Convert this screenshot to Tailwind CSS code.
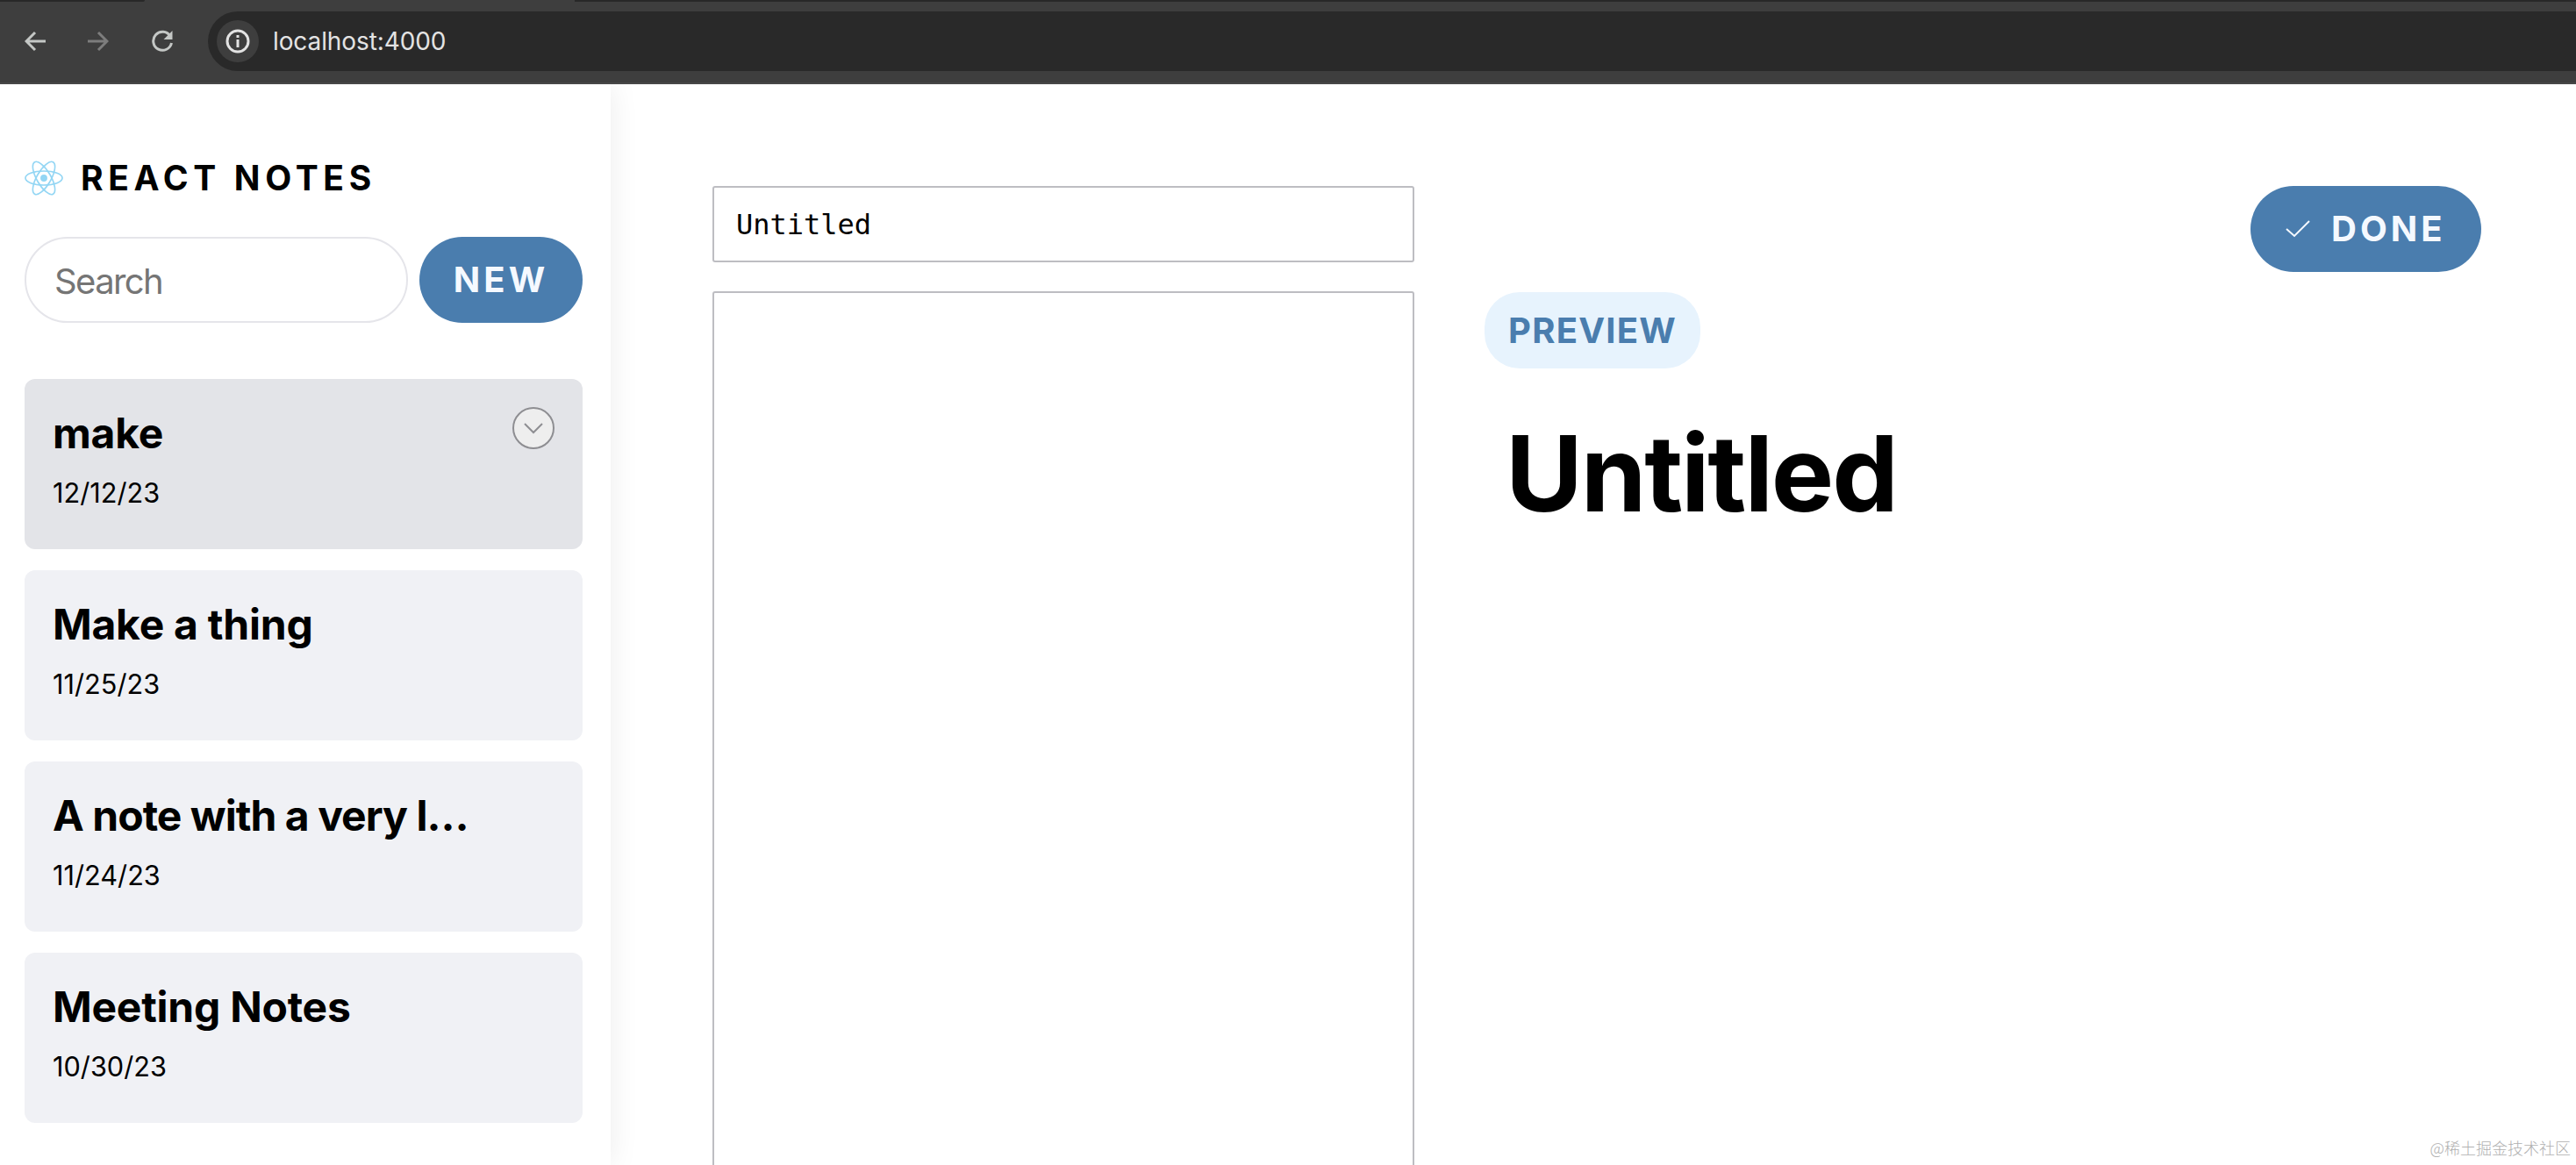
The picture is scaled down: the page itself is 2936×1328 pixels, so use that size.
<!DOCTYPE html>
<html lang="en">
<head>
<meta charset="utf-8">
<title>React Notes</title>
<script src="https://cdn.jsdelivr.net/npm/@tailwindcss/browser@4"></script>
</head>
<body class="h-[1328px] w-[2936px] overflow-hidden bg-white font-['Inter',sans-serif] text-black">
<div class="relative z-20 flex h-[96px] items-center border-b-2 border-[#474747] bg-[#3e3e3e] pl-[28px]">
  <div class="absolute left-0 top-0 h-[2px] w-[165px] rounded-br-[4px] bg-[#282828]"></div>
  <div class="absolute left-[655px] right-0 top-0 h-[2px] bg-[#282828]"></div>
  <div class="flex items-center gap-[48px]">
    <svg class="h-[24px] w-[24px]" viewBox="0 0 24 24" fill="none" stroke="#c4c7c5" stroke-width="3"><path d="M24 12H3M12 2 2 12l10 10"/></svg>
    <svg class="h-[24px] w-[24px]" viewBox="0 0 24 24" fill="none" stroke="#7d7d7d" stroke-width="3"><path d="M0 12h21M12 2l10 10-10 10"/></svg>
    <svg class="h-[26px] w-[26px]" viewBox="0 0 26 26" fill="none" stroke="#c4c7c5" stroke-width="3"><path d="M22 7a10.5 10.5 0 1 0 1.5 8"/><path d="M24.5 1v10h-10z" fill="#c4c7c5" stroke="none"/></svg>
  </div>
  <div class="ml-[39px] flex h-[68px] flex-1 items-center rounded-l-[34px] bg-[#292929] pl-[10px]">
    <div class="flex h-[48px] w-[48px] items-center justify-center rounded-full bg-[#3e3e3e]">
      <svg class="h-[28px] w-[28px]" viewBox="0 0 28 28" fill="none" stroke="#e3e3e3" stroke-width="3"><circle cx="14" cy="14" r="12"/><path d="M14 12v9M14 7v3"/></svg>
    </div>
    <span class="ml-[16px] text-[28px] tracking-[-0.1px] text-[#e3e3e3]">localhost:4000</span>
  </div>
</div>
<div class="flex h-[1232px] overflow-hidden">
  <aside class="relative z-10 flex w-[696px] shrink-0 flex-col bg-white pl-[28px] pr-[32px] pt-[87px] shadow-[0_0_32px_rgba(0,0,0,0.08)]">
    <div class="flex h-[40px] items-center gap-[20px]">
      <svg class="h-[40px] w-[44px]" viewBox="-11.5 -10.23 23 20.46" fill="none" stroke="#93d6f4" stroke-width="0.85"><circle r="2.05" fill="#93d6f4" stroke="none"/><ellipse rx="11" ry="4.2"/><ellipse rx="11" ry="4.2" transform="rotate(60)"/><ellipse rx="11" ry="4.2" transform="rotate(120)"/></svg>
      <span class="text-[39px] font-bold leading-[42px] tracking-[0.145em]">REACT NOTES</span>
    </div>
    <div class="mt-[47px] flex gap-[13px]">
      <div class="flex h-[98px] w-[437px] items-center rounded-full border-2 border-[#e5e5ea] pl-[32px] pt-[3px] text-[40px] tracking-[-1.6px] text-[#757575]">Search</div>
      <div class="flex h-[98px] w-[186px] items-center justify-center rounded-full bg-[#4a7dae] text-[40px] font-bold tracking-[0.1em] text-[#f5f9ff]">NEW</div>
    </div>
    <ul class="mt-[64px] flex flex-col gap-[24px]">
      <li class="relative h-[194px] rounded-[12px] bg-[#e3e4e8] pl-[32px] pt-[32px]">
        <div class="truncate text-[48px] font-bold leading-[60px] tracking-[-0.005em]">make</div>
        <div class="mt-[18px] text-[30.7px] leading-[40px]">12/12/23</div>
        <div class="absolute right-[32px] top-[32px] flex h-[48px] w-[48px] items-center justify-center rounded-full border-2 border-[#8e8e92] bg-[#eeeeee]">
          <svg class="h-[14px] w-[24px]" viewBox="0 0 24 14" fill="none" stroke="#8e8e92" stroke-width="2"><path d="M2 2l10 10L22 2"/></svg>
        </div>
      </li>
      <li class="h-[194px] rounded-[12px] bg-[#f0f1f5] pl-[32px] pt-[32px]">
        <div class="truncate text-[48px] font-bold leading-[60px] tracking-[-0.005em]">Make a thing</div>
        <div class="mt-[18px] text-[30.7px] leading-[40px]">11/25/23</div>
      </li>
      <li class="h-[194px] rounded-[12px] bg-[#f0f1f5] pl-[32px] pt-[32px]">
        <div class="truncate text-[48px] font-bold leading-[60px] tracking-[-0.02em]">A note with a very l…</div>
        <div class="mt-[18px] text-[30.7px] leading-[40px]">11/24/23</div>
      </li>
      <li class="h-[194px] rounded-[12px] bg-[#f0f1f5] pl-[32px] pt-[32px]">
        <div class="truncate text-[48px] font-bold leading-[60px] tracking-[-0.005em]">Meeting Notes</div>
        <div class="mt-[18px] text-[30.7px] leading-[40px]">10/30/23</div>
      </li>
    </ul>
  </aside>
  <main class="relative flex flex-1 gap-[80px] pl-[116px] pr-[108px] pt-[116px]">
    <form class="flex w-[800px] shrink-0 flex-col gap-[33px]">
      <div class="flex h-[87px] shrink-0 items-center rounded-[3px] border-2 border-[#bdbdc2] pl-[25px] font-['DejaVu_Sans_Mono',monospace] text-[32px]">Untitled</div>
      <div class="h-[1200px] shrink-0 rounded-[3px] border-2 border-[#bdbdc2]"></div>
    </form>
    <section class="flex flex-1 flex-col items-start">
      <div class="flex h-[98px] w-[263px] items-center gap-[24px] self-end rounded-full bg-[#4a7dae] pl-[40px] text-[40px] font-bold tracking-[0.1em] text-[#f5f9ff]">
        <svg class="h-[20px] w-[28px]" viewBox="0 0 28 20" fill="none" stroke="#f5f9ff" stroke-width="2"><path d="M1 10l9 8L27 1"/></svg>
        <span>DONE</span>
      </div>
      <div class="mt-[23px] flex h-[87px] w-[246px] items-center justify-center rounded-[40px] bg-[#e7f3fd] pt-[1px] text-[40px] font-bold tracking-[0.03em] text-[#4a7dae]">PREVIEW</div>
      <h1 class="ml-[24px] mt-[45px] text-[120px] font-bold leading-[150px] tracking-[-0.018em]">Untitled</h1>
    </section>
    <div class="absolute bottom-[8px] right-[6px] font-['Noto_Sans_CJK_SC',sans-serif] text-[18px] font-light leading-[24px] text-[#b0b0b0]">@稀土掘金技术社区</div>
  </main>
</div>
</body>
</html>
